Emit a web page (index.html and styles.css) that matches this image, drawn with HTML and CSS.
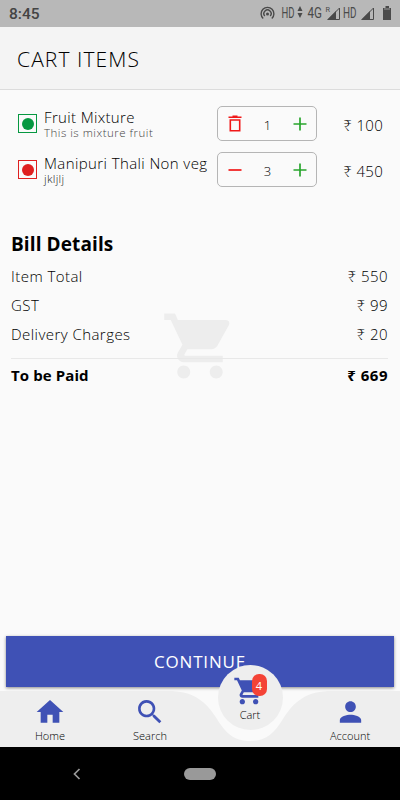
FILE: index.html
```html
<!DOCTYPE html>
<html lang="en">
<head>
  <meta charset="UTF-8">
  <meta name="viewport" content="width=device-width, initial-scale=1.0">
  <title>Cart Items</title>
  <link rel="stylesheet" href="styles.css">
</head>
<body>
  <!-- Status bar -->
  <div class="status">
    <span class="time">8:45</span>
    <svg class="status-icons" width="140" height="27" viewBox="260 0 140 27">
      <g fill="none" stroke="#4a4a4a" stroke-width="1.4">
        <path d="M263.200 18.500a6.400 6.400 0 1 1 8.600 0"/>
        <path d="M264.800 16a3.600 3.600 0 1 1 5.400 0"/>
      </g>
      <circle cx="267.500" cy="14" r="1.500" fill="#4a4a4a"/>
      <g fill="#4a4a4a" font-family="Roboto, sans-serif" font-weight="400">
        <text x="281.500" y="18" font-size="14" textLength="13" lengthAdjust="spacingAndGlyphs">HD</text>
        <text x="307.500" y="18" font-size="14" textLength="14.500" lengthAdjust="spacingAndGlyphs">4G</text>
        <text x="325.500" y="12" font-size="8" textLength="4.500" lengthAdjust="spacingAndGlyphs">R</text>
        <text x="343" y="18" font-size="14" textLength="13.500" lengthAdjust="spacingAndGlyphs">HD</text>
        <path d="M300 6l2.500 5h-5zM300 18l2.500-5h-5z"/>
        <path d="M327 20l9-9v9zM361 20l9-9v9z"/>
        <path d="M383 8h2.500V6h3.500v2h2v12h-8z"/>
      </g>
      <path d="M328 19.500L339.500 8v11.500zM362 19.500L373.500 8v11.500z" fill="none" stroke="#4a4a4a"/>
      <path d="M384 9h6" stroke="#999"/>
    </svg>
  </div>

  <header class="header">CART ITEMS</header>

  <main class="main">
    <!-- Watermark -->
    <svg class="watermark" width="78" height="78" viewBox="0 0 24 24"><path d="M7 18c-1.100 0-2 .9-2 2s.9 2 2 2 2-.9 2-2-.9-2-2-2zM1 2v2h2l3.600 7.600-1.400 2.400c-.8 1.400.3 3 1.800 3h12v-2H7.400a.25.25 0 0 1-.2-.4L8.100 13h7.400c.8 0 1.400-.4 1.800-1l3.600-6.500A1 1 0 0 0 20 4H5.200l-.9-2zM17 18c-1.100 0-2 .9-2 2s.9 2 2 2 2-.9 2-2-.9-2-2-2z"/></svg>

    <!-- Items -->
    <section class="items">
      <div class="item">
        <span class="mark veg"></span>
        <div class="info">
          <div class="name fruit">Fruit Mixture</div>
          <div class="desc">This is mixture fruit</div>
        </div>
        <div class="stepper">
          <svg width="20" height="20" viewBox="0 0 20 20" fill="none" stroke="#f01818" stroke-width="1.600"><path d="M3.500 3.200h13M7.500 2.200h5M5.300 6h9.400v10.700H5.300z"/></svg>
          <span class="count">1</span>
          <svg width="20" height="20" viewBox="0 0 20 20" stroke="#28a52d" stroke-width="1.700"><path d="M3.500 10h13M10 3.500v13"/></svg>
        </div>
        <span class="price">₹ 100</span>
      </div>
      <div class="item">
        <span class="mark nonveg"></span>
        <div class="info">
          <div class="name thali">Manipuri Thali Non veg</div>
          <div class="desc dark">jkljlj</div>
        </div>
        <div class="stepper">
          <svg width="20" height="20" viewBox="0 0 20 20" stroke="#f01818" stroke-width="1.700"><path d="M3.500 10h13"/></svg>
          <span class="count">3</span>
          <svg width="20" height="20" viewBox="0 0 20 20" stroke="#28a52d" stroke-width="1.700"><path d="M3.500 10h13M10 3.500v13"/></svg>
        </div>
        <span class="price">₹ 450</span>
      </div>
    </section>

    <!-- Bill -->
    <section class="bill">
      <h2>Bill Details</h2>
      <div class="row"><span>Item Total</span><span>₹ 550</span></div>
      <div class="row"><span>GST</span><span>₹ 99</span></div>
      <div class="row"><span>Delivery Charges</span><span>₹ 20</span></div>
      <div class="row total"><span>To be Paid</span><span>₹ 669</span></div>
    </section>

    <button class="continue" type="button">CONTINUE</button>
  </main>

  <!-- Bottom tabs -->
  <nav class="tabs">
    <svg class="tabs-bg" width="400" height="56" viewBox="0 0 400 56"><path d="M0 0H168C193 0 206 10 217 28C227 44 235 50 250 50S273 44 283 28C294 10 307 0 332 0H400V56H0z"/></svg>
    <a class="tab">
      <svg width="32" height="32" viewBox="0 0 24 24"><path d="M10 20v-6h4v6h5v-8h3L12 3 2 12h3v8z"/></svg>
      <span>Home</span>
    </a>
    <a class="tab">
      <svg width="32" height="32" viewBox="0 0 24 24"><path d="M15.500 14h-.79l-.28-.27A6.500 6.500 0 1 0 13.730 14.430l.27.28v.79l5 5L20.490 19zM9.500 14a4.500 4.500 0 1 1 0-9 4.500 4.500 0 0 1 0 9z"/></svg>
      <span>Search</span>
    </a>
    <a class="tab">
      <span class="bubble">
        <svg width="32" height="32" viewBox="0 0 24 24"><path d="M7 18c-1.100 0-2 .9-2 2s.9 2 2 2 2-.9 2-2-.9-2-2-2zM1 2v2h2l3.600 7.600-1.400 2.400c-.8 1.400.3 3 1.800 3h12v-2H7.400a.25.25 0 0 1-.2-.4L8.100 13h7.400c.8 0 1.400-.4 1.800-1l3.600-6.500A1 1 0 0 0 20 4H5.200l-.9-2zM17 18c-1.100 0-2 .9-2 2s.9 2 2 2 2-.9 2-2-.9-2-2-2z"/></svg>
        <span>Cart</span>
        <span class="badge">4</span>
      </span>
    </a>
    <a class="tab">
      <svg width="33" height="32" viewBox="0 0 24 24"><path d="M12 12c2.200 0 4-1.800 4-4s-1.800-4-4-4-4 1.800-4 4 1.800 4 4 4zm0 2c-2.700 0-8 1.300-8 4v2h16v-2c0-2.700-5.300-4-8-4z"/></svg>
      <span>Account</span>
    </a>
  </nav>

  <!-- System navigation -->
  <div class="system">
    <svg width="10" height="14" viewBox="0 0 10 14" fill="none" stroke="#999" stroke-width="1.700"><path d="M7.500 2L2.500 7l5 5"/></svg>
    <span class="pill"></span>
  </div>
</body>
</html>
```
FILE: styles.css
```css
* {
  box-sizing: border-box;
}
body {
  margin: 0;
  width: 400px;
  height: 800px;
  display: flex;
  flex-direction: column;
  overflow: hidden;
  background: #fafafa;
  color: #000;
  font-family: "Open Sans", "Noto Sans", sans-serif;
  font-weight: 300;
}
.status {
  height: 27px;
  background: #b8b8b8;
  display: flex;
  justify-content: space-between;
  align-items: center;
  padding-left: 9px;
}
.time {
  font: 500 15.5px Roboto, sans-serif;
  color: #444;
}
.header {
  height: 63px;
  line-height: 64px;
  padding-left: 17px;
  background: #f4f4f4;
  border-bottom: 1px solid #dcdcdc;
  font-size: 21px;
  letter-spacing: 1.1px;
}
.main {
  height: 601px;
  position: relative;
  display: flex;
  flex-direction: column;
}
.watermark {
  position: absolute;
  left: 161px;
  top: 217px;
  fill: #ededed;
}
.items {
  position: relative;
  padding: 16px 17px 0 18px;
  display: flex;
  flex-direction: column;
  gap: 11px;
}
.item {
  height: 35px;
  display: grid;
  grid-template-columns: 26px 173px 100px 1fr;
  align-items: center;
}
.mark {
  width: 19px;
  height: 19px;
  border: 1px solid;
  display: flex;
  align-items: center;
  justify-content: center;
}
.mark::after {
  content: "";
  width: 12px;
  height: 12px;
  border-radius: 50%;
  background: currentColor;
}
.veg {
  color: #069841;
}
.nonveg {
  color: #df2020;
}
.info {
  padding-top: 2px;
  white-space: nowrap;
}
.name {
  font-size: 15px;
  line-height: 17px;
  letter-spacing: 0.4px;
}
.fruit {
  letter-spacing: 0.35px;
}
.desc {
  font-size: 11.5px;
  line-height: 14px;
  letter-spacing: 0.5px;
  color: #444;
}
.dark {
  color: #222;
  letter-spacing: 0.3px;
}
.stepper {
  height: 35px;
  border: 1px solid #b5b5b5;
  border-radius: 5px;
  padding: 0 6px 0 7px;
  display: flex;
  align-items: center;
  justify-content: space-between;
}
.count {
  font-size: 13px;
  padding-top: 2px;
}
.price {
  text-align: right;
  font-size: 15px;
  padding-top: 3px;
  letter-spacing: 0.3px;
}
.bill {
  position: relative;
  padding: 44px 12px 0 11px;
}
.bill h2 {
  margin: 0 0 4px;
  font-size: 19px;
  line-height: 26px;
  font-weight: 700;
  letter-spacing: 0.1px;
}
.row {
  height: 29px;
  display: flex;
  justify-content: space-between;
  align-items: center;
  font-size: 15px;
  letter-spacing: 0.45px;
}
.total {
  height: 33px;
  margin-top: 10px;
  border-top: 1px solid #e8e8e8;
  font-weight: 700;
  letter-spacing: 0.1px;
}
.total span:last-child {
  letter-spacing: 0.5px;
}
.continue {
  margin: auto 6px 4px;
  height: 51px;
  border: none;
  background: #3f51b5;
  color: #fff;
  font: 400 17px "Open Sans", "Noto Sans", sans-serif;
  letter-spacing: 0.8px;
  box-shadow: 0 1px 3px rgba(0, 0, 0, 0.45);
}
.tabs {
  height: 56px;
  position: relative;
  display: flex;
}
.tabs-bg {
  position: absolute;
  left: 0;
  top: 0;
  fill: #eee;
}
.tab {
  flex: 1;
  position: relative;
  padding-top: 5px;
  display: flex;
  flex-direction: column;
  align-items: center;
  font-size: 11px;
  line-height: 16px;
  color: #000;
}
.tab svg {
  fill: #3f51b5;
}
.bubble {
  position: absolute;
  top: -26px;
  width: 65px;
  height: 65px;
  padding-top: 10px;
  border-radius: 50%;
  background: #eee;
  display: flex;
  flex-direction: column;
  align-items: center;
}
.bubble svg {
  margin-right: 2px;
}
.badge {
  position: absolute;
  left: 34px;
  top: 9px;
  width: 15px;
  height: 22px;
  border-radius: 7px;
  background: #f44336;
  color: #fff;
  font-weight: 400;
  line-height: 23px;
  text-align: center;
}
.system {
  height: 53px;
  background: #000;
  display: flex;
  align-items: center;
  padding-left: 72px;
}
.pill {
  width: 32px;
  height: 12px;
  margin-left: 102px;
  border-radius: 6px;
  background: #999;
}
```
